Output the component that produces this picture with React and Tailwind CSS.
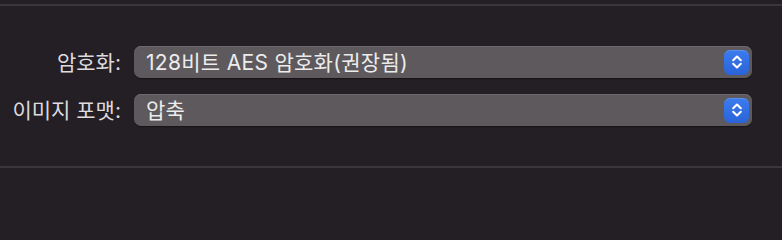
import React from "react";

function Chevrons() {
  return (
    <svg width="12" height="16" viewBox="0 0 12 16" fill="none">
      <path d="M2.2 6.2 L6 2.6 L9.8 6.2" stroke="white" strokeWidth="2.1" strokeLinecap="round" strokeLinejoin="round" />
      <path d="M2.2 9.8 L6 13.4 L9.8 9.8" stroke="white" strokeWidth="2.1" strokeLinecap="round" strokeLinejoin="round" />
    </svg>
  );
}

function Popup({ value }) {
  return (
    <div className="flex h-[32px] w-[618px] items-center justify-between rounded-[7px] bg-[#5d595d] pl-[12px] pr-[3px] shadow-[inset_0_1px_0_#6d696d,0_0.5px_1px_rgba(0,0,0,0.4)]">
      <span className="text-[21px] leading-none tracking-[0.3px] text-[#ececec]">{value}</span>
      <div className="flex h-[25px] w-[25px] items-center justify-center rounded-[6px] bg-gradient-to-b from-[#3b7cf0] to-[#2a63d8] shadow-[inset_0_1px_0_rgba(255,255,255,0.15)]">
        <Chevrons />
      </div>
    </div>
  );
}

function Row({ label, value }) {
  return (
    <div className="flex items-center">
      <div className="w-[121px] whitespace-nowrap text-right text-[21px] leading-none text-[#dedade]">{label}</div>
      <div className="ml-[13px]">
        <Popup value={value} />
      </div>
    </div>
  );
}

export default function App() {
  return (
    <div
      className="min-h-screen w-full bg-[#241f24]"
      style={{ fontFamily: '"Inter", "Noto Sans CJK KR", sans-serif' }}
    >
      <div className="flex h-[200px] w-[782px] flex-col">
        <div className="h-[4px]" />
        <div className="h-[2px] bg-[#3a363a]" />
        <div className="flex flex-col gap-[16px] pt-[40px]">
          <Row label="암호화:" value="128비트 AES 암호화(권장됨)" />
          <Row label="이미지 포맷:" value="압축" />
        </div>
        <div className="mt-[40px] h-[2px] bg-[#3a363a]" />
      </div>
    </div>
  );
}
